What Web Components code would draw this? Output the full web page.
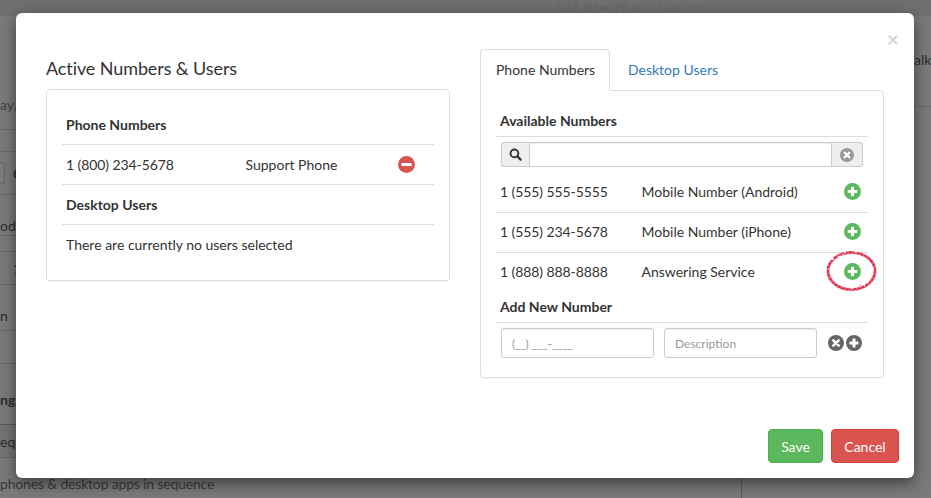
<!DOCTYPE html>
<html>
<head>
<meta charset="utf-8">
<style>
  html, body { margin: 0; height: 100%; overflow: hidden; background: #7a7a7a; }
  body { font-family: Lato, "Liberation Sans", sans-serif; font-size: 14px; color: #333; }
</style>
</head>
<body>

<back-page></back-page>

<modal-dialog>
  <section-panel slot="left" title-text="Active Numbers &amp; Users">
    <list-heading>Phone Numbers</list-heading>
    <number-row number="1 (800) 234-5678" label="Support Phone" kind="minus" col="179.5" end="15"></number-row>
    <list-heading>Desktop Users</list-heading>
    <number-row number="There are currently no users selected" last></number-row>
  </section-panel>

  <tab-panel slot="right">
    <list-heading compact>Available Numbers</list-heading>
    <search-box></search-box>
    <number-row number="1 (555) 555-5555" label="Mobile Number (Android)" kind="plus" col="141.5" end="3" low></number-row>
    <number-row number="1 (555) 234-5678" label="Mobile Number (iPhone)" kind="plus" col="141.5" end="3" low></number-row>
    <number-row number="1 (888) 888-8888" label="Answering Service" kind="plus" col="141.5" end="3" last ringed></number-row>
    <list-heading compact>Add New Number</list-heading>
    <add-number></add-number>
  </tab-panel>
</modal-dialog>

<script>
const GLYPHS = {
  plus: '<rect x="3.5" y="6.5" width="9" height="3" rx=".5" fill="#fff"/><rect x="6.5" y="3.5" width="3" height="9" rx=".5" fill="#fff"/>',
  minus: '<rect x="3.2" y="6.5" width="9.6" height="3" rx=".5" fill="#fff"/>',
  times: '<path d="M5.3 5.3l5.4 5.4M10.7 5.3l-5.4 5.4" stroke="#fff" stroke-width="2.5" stroke-linecap="round"/>'
};

class RoundIcon extends HTMLElement {
  connectedCallback() {
    const kind = this.getAttribute('kind') || 'plus';
    const color = this.getAttribute('color') || '#5cb85c';
    const size = this.getAttribute('size') || 17;
    this.attachShadow({ mode: 'open' }).innerHTML = `
      <style>:host { display: inline-flex; } svg { display: block; }</style>
      <svg width="${size}" height="${size}" viewBox="0 0 16 16">
        <circle cx="8" cy="8" r="8" fill="${color}"/>${GLYPHS[kind]}
      </svg>`;
  }
}
customElements.define('round-icon', RoundIcon);

// the dimmed page behind the dialog, only its edges show
class BackPage extends HTMLElement {
  connectedCallback() {
    this.attachShadow({ mode: 'open' }).innerHTML = `
      <style>
        :host { display: flex; flex-direction: column; height: 498px; overflow: hidden; color: #2e2e2e; white-space: nowrap; }
        .top { flex: none; height: 16px; box-sizing: border-box; padding-left: 555px; background: #6e6f71; color: #646566; font-size: 11px; line-height: 13px; letter-spacing: 1.5px; }
        .cols { flex: 1; display: flex; justify-content: space-between; }
        .left { width: 742px; }
        .row { display: flex; align-items: center; box-sizing: border-box; }
        .line { border-bottom: 1px solid #686868; }
        .box { width: 4px; height: 20px; margin-right: 8px; border: 1px solid #666; border-left: 0; border-radius: 0 3px 3px 0; }
        .last { border-right: 1px solid #5c5c5c; }
        .right { width: 17px; }
      </style>
      <div class="top">Add New Phone Number</div>
      <div class="cols">
        <div class="left">
          <div class="row line" style="height:114px;padding-top:64px;color:#444">ay,</div>
          <div class="row line" style="height:22px"></div>
          <div class="row line" style="height:43px"><span class="box"></span><b>C</b></div>
          <div class="row line" style="height:41px;padding-top:21px">od</div>
          <div class="row line" style="height:16px"></div>
          <div class="row line" style="height:33px;padding-left:13px">1</div>
          <div class="row line" style="height:46px;padding-top:16px">n</div>
          <div class="row line" style="height:33px"></div>
          <div class="row" style="height:61px;padding-top:10px;border-bottom:1px solid #5a5a5a"><b>ng</b></div>
          <div class="row line" style="height:33px;background:#747474">eq</div>
          <div class="row last" style="height:40px;padding-top:10px;color:#3a3a3a;letter-spacing:-.18px">phones &amp; desktop apps in sequence</div>
        </div>
        <div class="right">
          <div class="row line" style="height:91px;align-items:flex-start;line-height:88px">alk</div>
        </div>
      </div>`;
  }
}
customElements.define('back-page', BackPage);

class ModalDialog extends HTMLElement {
  connectedCallback() {
    this.attachShadow({ mode: 'open' }).innerHTML = `
      <style>
        :host { position: absolute; left: 16px; top: 13px; width: 898px; height: 465px; box-sizing: border-box; display: flex; flex-direction: column; background: #fff; border-radius: 6px; box-shadow: 0 5px 15px rgba(0,0,0,.5); }
        .close { position: absolute; right: 15px; top: 14px; font-size: 21px; line-height: 24px; font-weight: 700; color: #d5d5d5; }
        .body { flex: 1; display: flex; gap: 30px; padding: 36px 30px 0; }
        .col { width: 404px; }
        .foot { display: flex; justify-content: flex-end; gap: 8px; padding: 0 15px 15px; }
        button { font: inherit; color: #fff; height: 34px; padding: 0 12px; border: 1px solid; border-radius: 4px; }
        .save { width: 55px; background: #5cb85c; border-color: #4cae4c; }
        .cancel { width: 68px; background: #d9534f; border-color: #d43f3a; }
      </style>
      <span class="close">&times;</span>
      <div class="body">
        <div class="col"><slot name="left"></slot></div>
        <div class="col"><slot name="right"></slot></div>
      </div>
      <div class="foot">
        <button class="save">Save</button>
        <button class="cancel">Cancel</button>
      </div>`;
  }
}
customElements.define('modal-dialog', ModalDialog);

class SectionPanel extends HTMLElement {
  connectedCallback() {
    this.attachShadow({ mode: 'open' }).innerHTML = `
      <style>
        :host { display: block; }
        h4 { margin: 0; height: 40px; font-size: 18px; font-weight: 400; line-height: 38px; letter-spacing: -.1px; }
        .panel { height: 192px; box-sizing: border-box; padding: 15px; border: 1px solid #ddd; border-radius: 4px; box-shadow: 0 1px 1px rgba(0,0,0,.05); }
      </style>
      <h4>${this.getAttribute('title-text').replace('&', '&amp;')}</h4>
      <div class="panel"><slot></slot></div>`;
  }
}
customElements.define('section-panel', SectionPanel);

class TabPanel extends HTMLElement {
  connectedCallback() {
    this.attachShadow({ mode: 'open' }).innerHTML = `
      <style>
        :host { display: block; }
        .tabs { display: flex; height: 41px; position: relative; z-index: 1; }
        .tab { box-sizing: border-box; height: 42px; padding: 0 15px; line-height: 40px; white-space: nowrap; border: 1px solid transparent; border-radius: 4px 4px 0 0; }
        .active { width: 130px; border-color: #ddd #ddd #fff; background: #fff; }
        .link { margin-left: 2px; color: #337ab7; }
        .panel { height: 288px; box-sizing: border-box; padding: 15px; border: 1px solid #ddd; border-radius: 0 4px 4px 4px; box-shadow: 0 1px 1px rgba(0,0,0,.05); }
      </style>
      <div class="tabs">
        <span class="tab active">Phone Numbers</span>
        <span class="tab link">Desktop Users</span>
      </div>
      <div class="panel"><slot></slot></div>`;
  }
}
customElements.define('tab-panel', TabPanel);

class ListHeading extends HTMLElement {
  connectedCallback() {
    this.attachShadow({ mode: 'open' }).innerHTML = `
      <style>
        :host { display: block; box-sizing: border-box; height: 40px; padding: 0 4px; line-height: 40px; font-weight: 700; border-bottom: 1px solid #ddd; }
        :host([compact]) { height: 31px; line-height: 30px; }
      </style>
      <slot></slot>`;
  }
}
customElements.define('list-heading', ListHeading);

class NumberRow extends HTMLElement {
  connectedCallback() {
    const col = this.getAttribute('col');
    const kind = this.getAttribute('kind');
    const label = this.getAttribute('label');
    this.attachShadow({ mode: 'open' }).innerHTML = `
      <style>
        :host { display: flex; align-items: center; box-sizing: border-box; height: 40px; padding: 0 4px; border-bottom: 1px solid #ddd; position: relative; white-space: nowrap; }
        :host([last]) { border-bottom: 0; padding-bottom: 1px; }
        :host([low]) { border-bottom-color: transparent; box-shadow: 0 1px 0 #ddd; }
        .num { flex: none; ${col ? `width: ${col}px; letter-spacing: -.08px;` : ''} }
        .label { flex: 1; }
        .end { flex: none; margin-right: ${this.getAttribute('end') || 3.5}px; display: flex; }
        .ring { position: absolute; right: -10px; top: -2px; overflow: visible; }
      </style>
      <span class="num">${this.getAttribute('number')}</span>
      ${label ? `<span class="label">${label}</span>` : ''}
      ${kind ? `<span class="end"><round-icon kind="${kind}" color="${kind === 'minus' ? '#d9534f' : '#5cb85c'}"></round-icon></span>` : ''}
      ${this.hasAttribute('ringed') ? `<svg class="ring" width="52" height="42" viewBox="0 0 52 42" fill="none">
        <filter id="rough" x="-10%" y="-10%" width="120%" height="120%">
          <feTurbulence type="fractalNoise" baseFrequency=".22" numOctaves="2" seed="4"/>
          <feDisplacementMap in="SourceGraphic" scale="2.5"/>
        </filter>
        <g filter="url(#rough)">
          <ellipse cx="25.5" cy="21" rx="23.5" ry="18.5" stroke="#ea6a82" stroke-width="3"/>
          <ellipse cx="25.5" cy="21" rx="23.5" ry="18.5" stroke="#d8233f" stroke-width="1.6" stroke-dasharray="2.5 1.5"/>
        </g>
      </svg>` : ''}`;
  }
}
customElements.define('number-row', NumberRow);

class SearchBox extends HTMLElement {
  connectedCallback() {
    this.attachShadow({ mode: 'open' }).innerHTML = `
      <style>
        :host { display: flex; height: 25px; margin: 5px 5px; }
        .addon { flex: none; display: flex; align-items: center; justify-content: center; box-sizing: border-box; background: #eee; border: 1px solid #ccc; }
        .l { width: 28px; border-right: 0; border-radius: 3px 0 0 3px; }
        .r { width: 31px; border-left: 0; border-radius: 0 3px 3px 0; }
        input { flex: 1; min-width: 0; box-sizing: border-box; border: 1px solid #ccc; padding: 0 8px; outline: 0; box-shadow: inset 0 1px 1px rgba(0,0,0,.075); }
        svg { display: block; }
      </style>
      <span class="addon l">
        <svg width="13" height="13" viewBox="0 0 13 13" fill="none">
          <circle cx="5.4" cy="5.4" r="3.9" stroke="#333" stroke-width="1.9"/>
          <path d="M8.4 8.4l3.2 3.2" stroke="#333" stroke-width="2.2" stroke-linecap="round"/>
        </svg>
      </span>
      <input type="text">
      <span class="addon r"><round-icon kind="times" color="#999" size="14"></round-icon></span>`;
  }
}
customElements.define('search-box', SearchBox);

class AddNumber extends HTMLElement {
  connectedCallback() {
    this.attachShadow({ mode: 'open' }).innerHTML = `
      <style>
        :host { display: flex; align-items: center; margin: 5px 5px 0; }
        input { box-sizing: border-box; width: 153px; height: 30px; padding: 0 10px; font: 12px Lato, "Liberation Sans", sans-serif; color: #555; border: 1px solid #ccc; border-radius: 3px; outline: 0; box-shadow: inset 0 1px 1px rgba(0,0,0,.075); }
        input::placeholder { color: #999; opacity: 1; }
        .first { margin-right: 10px; letter-spacing: -.2px; }
        .acts { display: flex; gap: 2px; margin-left: 11px; }
      </style>
      <input class="first" placeholder="(__) ___-____">
      <input placeholder="Description">
      <span class="acts">
        <round-icon kind="times" color="#666" size="16"></round-icon>
        <round-icon kind="plus" color="#666" size="16"></round-icon>
      </span>`;
  }
}
customElements.define('add-number', AddNumber);
</script>
</body>
</html>
